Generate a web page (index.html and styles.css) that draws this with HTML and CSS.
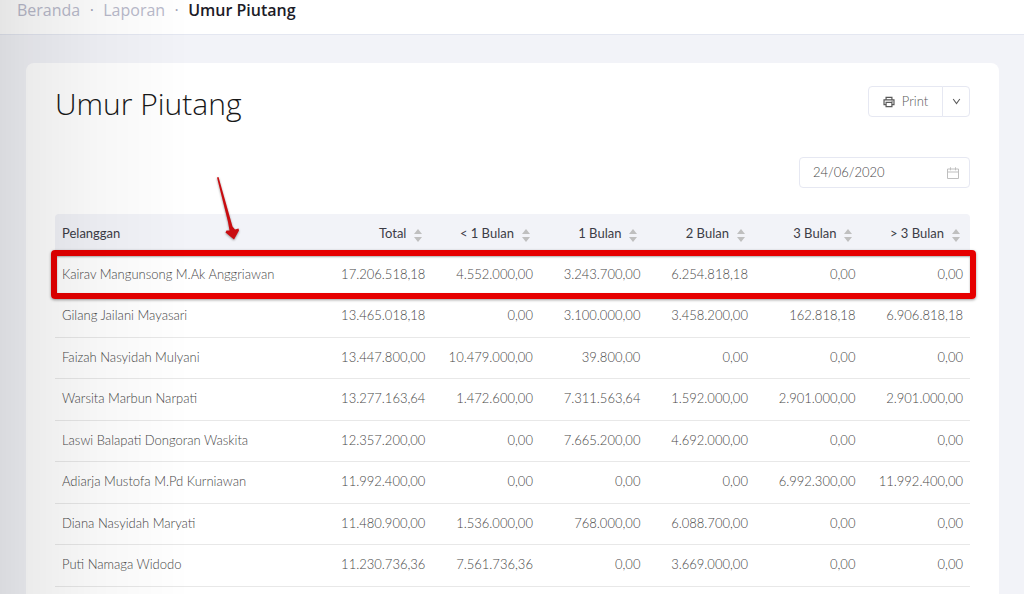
FILE: index.html
```html
<!DOCTYPE html>
<html lang="id">
<head>
<meta charset="utf-8">
<meta name="viewport" content="width=device-width, initial-scale=1">
<title>Umur Piutang</title>
<link rel="stylesheet" href="styles.css">
</head>
<body>
<nav class="breadcrumb" aria-label="Breadcrumb">
  <a href="#">Beranda</a><span class="dot">·</span><a href="#">Laporan</a><span class="dot">·</span><span class="current">Umur Piutang</span>
</nav>
<main class="card">
  <header class="card-head">
    <h1>Umur Piutang</h1>
    <div class="btn-group">
      <button class="btn btn-print" type="button">
        <svg width="12" height="12" viewBox="0 0 14 14" fill="none" stroke="currentColor" stroke-width="1.4" aria-hidden="true"><path d="M3.6 4.6V1.6h6.8v3M3.6 10H1.2V4.6h11.6V10h-2.4"/><path d="M3.6 7.5h6.8v5H3.6z"/><path d="M10 6.1h1.2"/></svg>
        <span>Print</span>
      </button>
      <button class="btn btn-more" type="button" aria-label="Pilihan print">
        <svg width="9" height="7" viewBox="0 0 10 8" fill="none" stroke="currentColor" stroke-width="1.2" aria-hidden="true"><path d="M1.2 1.2 5 6.4 8.8 1.2"/></svg>
      </button>
    </div>
  </header>
  <div class="filters">
    <label class="date-field">
      <input type="text" value="24/06/2020" aria-label="Tanggal">
      <svg width="12" height="12" viewBox="0 0 12 12" fill="none" stroke="currentColor" aria-hidden="true"><path d="M.5 2h11v9.500H.5zM.5 5h11M3.500.3v3M8.500.3v3"/></svg>
    </label>
  </div>
  <div class="table-wrap">
    <table class="aging">
      <thead>
        <tr>
          <th scope="col" class="name">Pelanggan</th>
          <th scope="col"><span class="sort">Total<svg width="8" height="13" viewBox="0 0 8 13" aria-hidden="true"><path d="M4 0 8 5H0zM0 8h8l-4 5z"/></svg></span></th>
          <th scope="col"><span class="sort">&lt; 1 Bulan<svg width="8" height="13" viewBox="0 0 8 13" aria-hidden="true"><path d="M4 0 8 5H0zM0 8h8l-4 5z"/></svg></span></th>
          <th scope="col"><span class="sort">1 Bulan<svg width="8" height="13" viewBox="0 0 8 13" aria-hidden="true"><path d="M4 0 8 5H0zM0 8h8l-4 5z"/></svg></span></th>
          <th scope="col"><span class="sort">2 Bulan<svg width="8" height="13" viewBox="0 0 8 13" aria-hidden="true"><path d="M4 0 8 5H0zM0 8h8l-4 5z"/></svg></span></th>
          <th scope="col"><span class="sort">3 Bulan<svg width="8" height="13" viewBox="0 0 8 13" aria-hidden="true"><path d="M4 0 8 5H0zM0 8h8l-4 5z"/></svg></span></th>
          <th scope="col"><span class="sort">&gt; 3 Bulan<svg width="8" height="13" viewBox="0 0 8 13" aria-hidden="true"><path d="M4 0 8 5H0zM0 8h8l-4 5z"/></svg></span></th>
        </tr>
      </thead>
      <tbody>
        <tr><td>Kairav Mangunsong M.Ak Anggriawan</td><td>17.206.518,18</td><td>4.552.000,00</td><td>3.243.700,00</td><td>6.254.818,18</td><td>0,00</td><td>0,00</td></tr>
        <tr><td>Gilang Jailani Mayasari</td><td>13.465.018,18</td><td>0,00</td><td>3.100.000,00</td><td>3.458.200,00</td><td>162.818,18</td><td>6.906.818,18</td></tr>
        <tr><td>Faizah Nasyidah Mulyani</td><td>13.447.800,00</td><td>10.479.000,00</td><td>39.800,00</td><td>0,00</td><td>0,00</td><td>0,00</td></tr>
        <tr><td>Warsita Marbun Narpati</td><td>13.277.163,64</td><td>1.472.600,00</td><td>7.311.563,64</td><td>1.592.000,00</td><td>2.901.000,00</td><td>2.901.000,00</td></tr>
        <tr><td>Laswi Balapati Dongoran Waskita</td><td>12.357.200,00</td><td>0,00</td><td>7.665.200,00</td><td>4.692.000,00</td><td>0,00</td><td>0,00</td></tr>
        <tr><td>Adiarja Mustofa M.Pd Kurniawan</td><td>11.992.400,00</td><td>0,00</td><td>0,00</td><td>0,00</td><td>6.992.300,00</td><td>11.992.400,00</td></tr>
        <tr><td>Diana Nasyidah Maryati</td><td>11.480.900,00</td><td>1.536.000,00</td><td>768.000,00</td><td>6.088.700,00</td><td>0,00</td><td>0,00</td></tr>
        <tr><td>Puti Namaga Widodo</td><td>11.230.736,36</td><td>7.561.736,36</td><td>0,00</td><td>3.669.000,00</td><td>0,00</td><td>0,00</td></tr>
      </tbody>
    </table>
    <div class="highlight"></div>
    <svg class="arrow" width="28" height="68" viewBox="0 0 28 68" aria-hidden="true"><path d="M4 1.500 5.500 1 19.500 50.500 22 53.500 25.500 52.500 26 54.500 21 63.500 12.500 56.500 13.500 54.500 16.500 54.500 15 46z"/></svg>
  </div>
</main>
<div class="edge-shade"></div>
</body>
</html>
```

FILE: styles.css
```css
* { box-sizing: border-box; }

body {
  margin: 0;
  min-height: 100vh;
  overflow: hidden;
  background: #f2f3f8;
  color: #484848;
  font: 300 13px/20px Lato, "Open Sans", sans-serif;
}

.breadcrumb {
  display: flex;
  align-items: flex-start;
  height: 35px;
  padding: 0 17px;
  border-bottom: 1px solid #e4e7f1;
  background: #fff;
  font: 400 16px/20px "Open Sans", sans-serif;
}
.breadcrumb a { color: #b9bacb; text-decoration: none; }
.dot { width: 23px; text-align: center; color: #a2a3b7; }
.current { color: #1c1c28; font-weight: 600; }

.card {
  margin: 28px 25px 0 26px;
  padding: 23px 29px 29px;
  border-radius: 8px;
  background: #fff;
}
.card-head {
  display: flex;
  justify-content: space-between;
  align-items: flex-start;
}
h1 {
  margin: 0;
  color: #181818;
  font: 300 30px/36px "Open Sans", sans-serif;
}

.btn-group { display: flex; }
.btn {
  display: flex;
  align-items: center;
  justify-content: center;
  height: 31px;
  padding: 0;
  border: 1px solid #e6e8f2;
  background: #fff;
  color: #595959;
  font: inherit;
}
.btn-print { gap: 7px; width: 75px; border-radius: 4px 0 0 4px; }
.btn-print span { padding-bottom: 2px; }
.btn-more { width: 28px; margin-left: -1px; border-radius: 0 4px 4px 0; }

.filters {
  display: flex;
  justify-content: flex-end;
  padding: 35px 0 26px;
}
.date-field {
  display: flex;
  align-items: center;
  width: 171px;
  height: 31px;
  padding: 0 10px 0 13px;
  border: 1px solid #e6e8f2;
  border-radius: 4px;
  color: #bfbfbf;
}
.date-field input {
  flex: 1;
  min-width: 0;
  padding: 0 0 2px;
  border: 0;
  outline: 0;
  background: none;
  color: #484848;
  font: inherit;
}

.table-wrap { position: relative; }
.aging {
  width: 100%;
  table-layout: fixed;
  border-collapse: separate;
  border-spacing: 0;
}
.aging tr { height: 41px; }
.aging tbody tr:nth-child(even) { height: 42px; }
.aging th, .aging td {
  padding: 0 7px 3px;
  text-align: right;
  white-space: nowrap;
}
.aging th {
  background: #f2f3f8;
  color: #3c3c46;
  font-weight: 400;
}
.aging .name { width: 29.5%; }
.aging th:first-child, .aging td:first-child { text-align: left; }
.aging th:first-child { border-radius: 4px 0 0 0; }
.aging th:last-child { border-radius: 0 4px 0 0; }
.aging td { border-bottom: 1px solid #e8e8e8; }
.sort {
  display: inline-flex;
  align-items: center;
  gap: 8px;
  padding-right: 3px;
}
.sort svg { margin-top: 5px; fill: #bfbfbf; }

.highlight {
  position: absolute;
  top: 36px;
  right: -6px;
  left: -4px;
  height: 49px;
  border: 6px solid #e60000;
  border-radius: 4px;
  box-shadow: 0 1px 3px #0006, inset 0 1px 2px #0005;
}
.arrow {
  position: absolute;
  top: -38px;
  left: 158px;
  fill: #c90c10;
  filter: drop-shadow(0 1px 1px #0006);
}

.edge-shade {
  position: fixed;
  top: 0;
  bottom: 0;
  left: 0;
  width: 190px;
  background: linear-gradient(90deg, #0000001a, #00000013 30px, #00000008 100px, transparent);
  pointer-events: none;
}
```
